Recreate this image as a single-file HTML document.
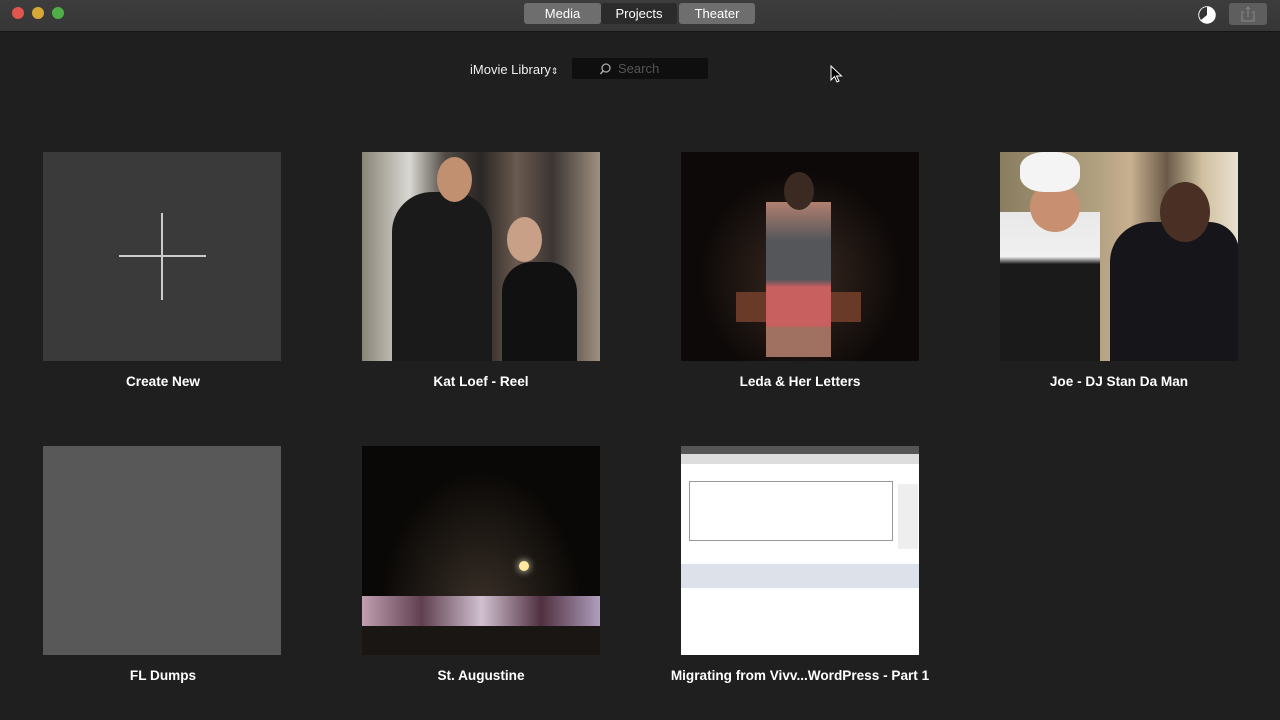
<!DOCTYPE html><html><head><style>
body{margin:0;width:1280px;height:720px;background:#1f1f1f;font-family:"Liberation Sans",sans-serif;overflow:hidden;position:relative}
.tb{position:absolute;left:0;top:0;width:1280px;height:31px;background:linear-gradient(#3d3d3d,#363636);border-bottom:1px solid #161616}
.dot{position:absolute;top:7px;width:12px;height:12px;border-radius:50%}
.tab{position:absolute;top:3px;height:21px;line-height:21px;color:#fff;font-size:13px;text-align:center;border-radius:3px}
.t{position:absolute;width:238px;height:209px;overflow:hidden}
.l{position:absolute;width:320px;text-align:center;color:#fff;font-size:13.6px;font-weight:bold}
</style></head><body>
<div class="tb">
<div class="dot" style="left:12px;background:#e0554e"></div>
<div class="dot" style="left:32px;background:#d7a836"></div>
<div class="dot" style="left:52px;background:#4fae45"></div>
<div class="tab" style="left:524px;width:77px;background:#6e6e6e">Media</div>
<div class="tab" style="left:601px;width:76px;background:#2b2b2b">Projects</div>
<div class="tab" style="left:679px;width:76px;background:#6e6e6e">Theater</div>
<svg style="position:absolute;left:1197px;top:5px" width="20" height="20"><circle cx="10" cy="10" r="8" fill="#fff" stroke="#fff" stroke-width="1.5"/><path d="M10 2 L10 10 L4 15 A8 8 0 0 1 10 2Z" fill="#333"/></svg>
<div style="position:absolute;left:1229px;top:3px;width:38px;height:22px;background:#5e5e5e;border-radius:3px"><svg width="38" height="22"><path d="M15 9h-2v9h12v-9h-2M19 4v10M17 6l2-2 2 2" fill="none" stroke="#888" stroke-width="1"/></svg></div>
</div>
<div style="position:absolute;left:470px;top:62px;color:#eee;font-size:13px">iMovie Library<span style="font-size:9px">⇕</span></div>
<div style="position:absolute;left:572px;top:58px;width:136px;height:21px;background:#0f0f0f;border-radius:2px;color:#555;font-size:13px;line-height:21px"><svg style="position:absolute;left:28px;top:4px" width="14" height="14"><circle cx="6" cy="6" r="4" fill="none" stroke="#aaa" stroke-width="1.3"/><path d="M3 9l-2.5 3" stroke="#aaa" stroke-width="1.5"/></svg><span style="position:absolute;left:46px">Search</span></div>
<svg style="position:absolute;left:830px;top:65px" width="14" height="20"><path d="M1 1v14l3.5-3.5 2.5 5.5 2-1-2.5-5h5z" fill="#000" stroke="#fff" stroke-width="1"/></svg>

<div class="t" style="left:43px;top:152px;background:#3a3a3a"><div style="position:absolute;left:118px;top:61px;width:2px;height:87px;background:#ccc"></div><div style="position:absolute;left:76px;top:103px;width:87px;height:2px;background:#ccc"></div></div>
<div class="t" style="left:362px;top:152px;background:linear-gradient(90deg,#8a8478 0%,#d8d8d2 20%,#514a44 35%,#2a2624 50%,#6a5a50 65%,#3b3533 80%,#a09080 100%)"><div style="position:absolute;left:30px;top:40px;width:100px;height:169px;background:#1a1a1a;border-radius:40px 40px 0 0"></div><div style="position:absolute;left:140px;top:110px;width:75px;height:99px;background:#111;border-radius:30px 30px 0 0"></div><div style="position:absolute;left:75px;top:5px;width:35px;height:45px;background:#c09070;border-radius:50%"></div><div style="position:absolute;left:145px;top:65px;width:35px;height:45px;background:#c8a088;border-radius:50%"></div></div>
<div class="t" style="left:681px;top:152px;background:radial-gradient(ellipse at 50% 60%,#3a2a22 0%,#0d0908 60%)"><div style="position:absolute;left:55px;top:140px;width:125px;height:30px;background:#6a3a28"></div><div style="position:absolute;left:85px;top:50px;width:65px;height:155px;background:linear-gradient(#b08070 0%,#55565a 25%,#55565a 50%,#c86060 55%,#c86060 80%,#a07060 81%)"></div><div style="position:absolute;left:103px;top:20px;width:30px;height:38px;background:#3a2a22;border-radius:50%"></div></div>
<div class="t" style="left:1000px;top:152px;background:linear-gradient(90deg,#8a7e60,#b0a080 40%,#c8b090 55%,#6a5a48 70%,#d0c0a0 85%,#e8e0d0)"><div style="position:absolute;left:0;top:60px;width:100px;height:149px;background:linear-gradient(#e8e8e8 0%,#f0f0f0 30%,#1a1a1a 35%)"></div><div style="position:absolute;left:110px;top:70px;width:129px;height:139px;background:#15151a;border-radius:40px 30px 0 0"></div><div style="position:absolute;left:160px;top:30px;width:50px;height:60px;background:#4a3024;border-radius:50%"></div><div style="position:absolute;left:30px;top:30px;width:50px;height:50px;background:#c89070;border-radius:50%"></div><div style="position:absolute;left:20px;top:0;width:60px;height:40px;background:#f4f4f4;border-radius:40%"></div></div>

<div class="t" style="left:43px;top:446px;background:#585858"></div>
<div class="t" style="left:362px;top:446px;background:radial-gradient(ellipse at 50% 80%,#3a3028 0%,#0a0806 60%)"><div style="position:absolute;left:0;top:150px;width:239px;height:45px;background:linear-gradient(90deg,#c0a0b0,#604050,#d0c0d0,#503040,#b0a0c0)"></div><div style="position:absolute;left:0;top:180px;width:239px;height:29px;background:#1a1614"></div><div style="position:absolute;left:157px;top:115px;width:10px;height:10px;background:#ffe8a0;border-radius:50%;box-shadow:0 0 8px #ffd"></div></div>
<div class="t" style="left:681px;top:446px;background:#fff"><div style="height:8px;background:#555"></div><div style="height:10px;background:#ddd"></div><div style="position:absolute;left:8px;top:35px;width:202px;height:58px;border:1px solid #999;background:#fff"></div><div style="position:absolute;left:217px;top:38px;width:20px;height:65px;background:#eee"></div><div style="position:absolute;left:0;top:118px;width:239px;height:24px;background:#dde2ea"></div></div>

<div class="l" style="left:3px;top:374px">Create New</div>
<div class="l" style="left:321px;top:374px">Kat Loef - Reel</div>
<div class="l" style="left:640px;top:374px">Leda &amp; Her Letters</div>
<div class="l" style="left:959px;top:374px">Joe - DJ Stan Da Man</div>
<div class="l" style="left:3px;top:668px">FL Dumps</div>
<div class="l" style="left:321px;top:668px">St. Augustine</div>
<div class="l" style="left:600px;top:668px;width:400px">Migrating from Vivv...WordPress - Part 1</div>
</body></html>
